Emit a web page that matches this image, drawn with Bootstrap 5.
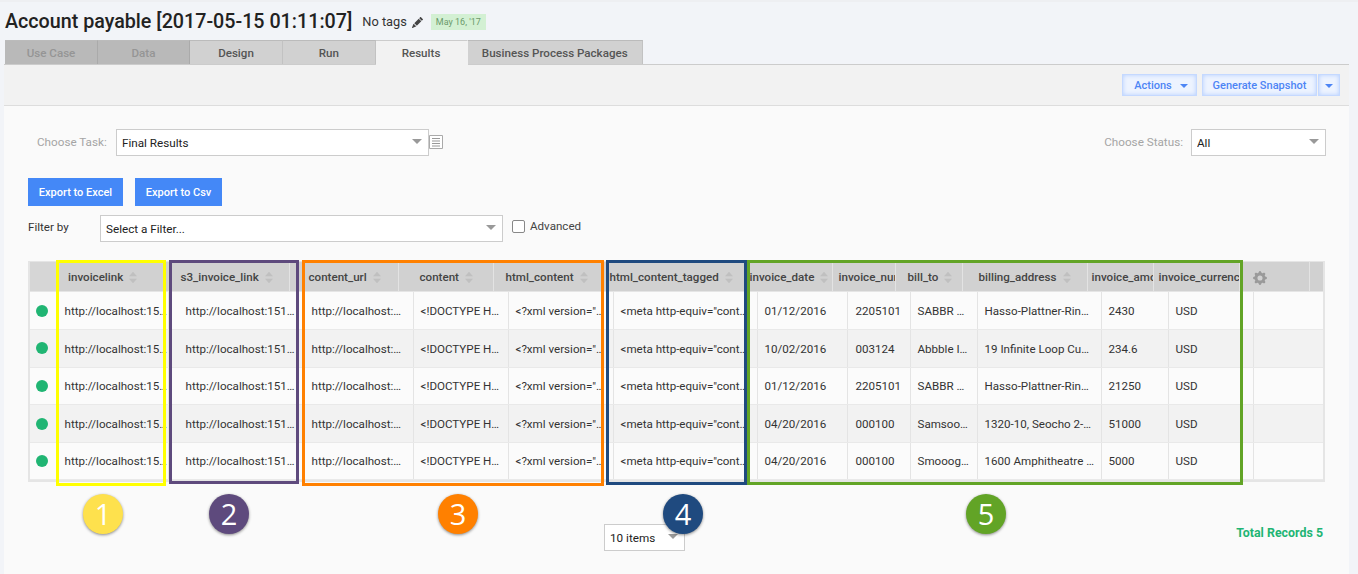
<!DOCTYPE html>
<html lang="en">
<head>
<meta charset="utf-8">
<title>Account payable</title>
<link href="https://cdn.jsdelivr.net/npm/bootstrap@5.3.0/dist/css/bootstrap.min.css" rel="stylesheet">
<style>
html,body{height:574px;overflow:hidden}
body{position:relative;background:#f2f4f8;font-family:Roboto,"Liberation Sans",sans-serif;font-size:11.6px;color:#333;border-top:2px solid #eeeff2}
.title-row{height:38px;padding:2px 0 0 5px;align-items:center}
.page-title{font-size:19.7px;font-weight:500;margin:0;color:#222;line-height:1}
.no-tags{font-size:12.8px;margin-left:10px;color:#333}
.pencil{width:11px;height:11px;fill:#444;margin-left:5px}
.date-tag{margin-left:8px;background:#d3f0d3;color:#6b9a6b;font-size:9px;height:16px;width:55px;line-height:16px;text-align:center}
.tab-strip{margin-left:5px;height:24px;flex-wrap:nowrap;border:0}
.tab-item{height:24px;line-height:25px;text-align:center;font-weight:500;background:#d1d1d1;color:#555;border-top:1px solid #bbb;border-right:1px solid #c2c2c2}
.tab-off{background:#b9b9b9;color:#959595;border-right-color:#aaa}
.tab-on{background:#f2f2f2;color:#555;border-right-color:#f2f2f2;border-top-color:#ccc;height:25px;position:relative;z-index:1}
.w-a{width:93px}.w-b{width:92px}.w-c{width:93px}.w-e{width:92.500px}.w-d{width:175.500px}
.main-panel{margin-left:4px;width:1345px;height:510px;background:#fafafa;border-top:1px solid #ccc}
.tool-row{height:41px;background:#f2f2f2;border-bottom:1px solid #ddd;padding:9px 9px 0 0;justify-content:flex-end;gap:5px}
.glow-btn{height:22px;padding:2px 0 0;font-size:11px;font-weight:500;color:#4d85f5;background:#edf3ff;border:1px solid #c5d9ff;border-radius:0;box-shadow:inset 0 0 4px #b4ceff;display:flex;align-items:center;justify-content:center}
.glow-btn:hover{color:#4d85f5;background:#edf3ff}
.b-act{width:75px;gap:8px;padding-left:3px}.b-snap{width:115px}.b-more{width:22px;margin-left:-4px}
.tri{width:0;height:0;border-left:4.500px solid transparent;border-right:4.500px solid transparent;border-top:4.500px solid #4d85f5}
.panel-inner{padding:23px 24px 0}
.soft-label{color:#a5a5a5;font-size:11.700px;padding-top:1px}
.pick{height:27px;font-size:11.700px;color:#222;padding:2px 24px 0 5px;border:1px solid #ccc;border-radius:0;background-color:#fff;background-image:url("data:image/svg+xml,%3Csvg xmlns='http://www.w3.org/2000/svg' width='10' height='5'%3E%3Cpath d='M0 0h10L5 5z' fill='%23999'/%3E%3C/svg%3E");background-size:10px 5px;background-position:right 6px top 9px;font-family:inherit}
.pick:focus{border-color:#ccc;box-shadow:none}
.task-label{margin-left:9px;width:79px;flex:none}
.task-pick{width:313px;flex:none}
.list-icon{width:14px;height:14px;margin-top:-2px;flex:none}
.status-label{margin-right:8px}
.status-pick{width:135px;flex:none;margin-right:-1px}
.btn-row{margin-top:22px;gap:12px}
.blue-btn{height:28px;font-size:11px;font-weight:500;color:#fff;background:#4488f7;border:0;border-radius:0;padding:2px 0 0;display:flex;align-items:center;justify-content:center}
.blue-btn:hover{background:#4488f7;color:#fff}
.w-xl{width:95px}.w-csv{width:87px}
.filter-row{margin-top:9px}
.filter-label{width:72px;flex:none;color:#333;padding-bottom:2px}
.filter-pick{width:403px;flex:none}
.adv-check{margin:0 0 0 9px;padding:0;display:flex;align-items:center;gap:5px;min-height:0;position:relative;top:-2px;color:#444}
.adv-check .form-check-input{margin:0;width:13px;height:13px;border-radius:2px;border:1px solid #888;float:none}
.grid-frame{margin-top:19px;width:1297px;height:221px;background:#e5e5e5;padding:1px 2px 2px}
.data-table{table-layout:fixed;margin:0;width:1293px;border-collapse:collapse;--bs-table-bg:transparent;--bs-table-border-color:transparent}
.head-table{background:#d1d1d1;height:29px}
.head-table th{padding:2px 0 0;height:29px;font-size:11.600px;font-weight:500;color:#444;white-space:nowrap;overflow:hidden;border-right:1px solid #e3e3e3;border-bottom:0;vertical-align:middle}
.head-table th:first-child{background:#d6d6d6;border-right:0}
.head-table th:last-child{border-right:0}
.sort-ic{width:8px;height:13px;margin-left:6px;vertical-align:-3px;fill:#c0c0c0}
.gear-ic{width:14px;height:14px;fill:#9a9a9a;margin-left:13px}
.body-table{margin-top:1px}
.body-table td{height:37.600px;padding:2px 0 0;font-size:11.600px;color:#333;white-space:nowrap;overflow:hidden;border-right:1px solid #e4e4e4;border-bottom:1px solid #e9e9e9;vertical-align:middle}
.body-table td:last-child{border-right:0}
.body-table tr:nth-child(odd) td{background:#fbfbfb}
.body-table tr:nth-child(even) td{background:#f2f2f2}
.status-dot{display:block;width:12px;height:12px;border-radius:50%;background:#20b573;margin-left:6px;margin-top:-2px}
.head-table col:nth-child(1){width:28px}
.head-table col:nth-child(2){width:113px}
.head-table col:nth-child(3){width:118px}
.head-table col:nth-child(4){width:109px}
.head-table col:nth-child(5){width:95px}
.head-table col:nth-child(6){width:114px}
.head-table col:nth-child(7){width:139px}
.head-table col:nth-child(8){width:86px}
.head-table col:nth-child(9){width:63px}
.head-table col:nth-child(10){width:67px}
.head-table col:nth-child(11){width:125px}
.head-table col:nth-child(12){width:66px}
.head-table col:nth-child(13){width:86px}
.head-table col:nth-child(14){width:70px}
.head-table col:nth-child(15){width:14px}
.head-table th:nth-child(2){padding-left:10px}
.head-table th:nth-child(3){padding-left:9px}
.head-table th:nth-child(4){padding-left:19px}
.head-table th:nth-child(5){padding-left:21px}
.head-table th:nth-child(6){padding-left:12px}
.head-table th:nth-child(7){padding-left:2px}
.head-table th:nth-child(8){padding-left:3px}
.head-table th:nth-child(9){padding-left:6px}
.head-table th:nth-child(10){padding-left:12px}
.head-table th:nth-child(11){padding-left:16px}
.head-table th:nth-child(12){padding-left:4px}
.head-table th:nth-child(13){padding-left:5px}
.body-table col:nth-child(1){width:27px}
.body-table col:nth-child(2){width:111px}
.body-table col:nth-child(3){width:136px}
.body-table col:nth-child(4){width:109px}
.body-table col:nth-child(5){width:95px}
.body-table col:nth-child(6){width:105px}
.body-table col:nth-child(7){width:144px}
.body-table col:nth-child(8){width:90px}
.body-table col:nth-child(9){width:63px}
.body-table col:nth-child(10){width:67px}
.body-table col:nth-child(11){width:124px}
.body-table col:nth-child(12){width:67px}
.body-table col:nth-child(13){width:85px}
.body-table col:nth-child(14){width:70px}
.body-table td{padding-left:7px}
.body-table td:first-child{padding-left:0}
.body-table td:nth-child(3){padding-left:17px}
.body-table td:nth-child(9){padding-left:8px}
.pager-row{margin-top:42px}
.pager-pick{width:81px;flex:none;margin-left:576px}
.total-text{color:#1fb574;font-weight:700;font-size:12.400px;margin-right:2px;padding-bottom:9px}
.mark-box{position:absolute;border:3px solid;pointer-events:none;top:258px}
.mb-1{left:56px;width:110px;height:226px;border-color:#ffff00}
.mb-2{left:169px;width:130px;height:224px;border-color:#5e4a7d}
.mb-3{left:302px;width:302px;height:226px;border-color:#ff8000}
.mb-4{left:606px;width:141px;height:225px;border-color:#1f4a7f}
.mb-5{left:747px;width:496px;height:225px;border-color:#62a426}
.num-disc{position:absolute;top:492px;width:40px;height:40px;border-radius:50%;color:#fff;font-family:"Open Sans","Liberation Sans",sans-serif;font-size:29px;line-height:40px;text-align:center;box-shadow:0 1px 3px rgba(0,0,0,.45)}
.nd-1{left:83px;background:#fee14d}
.nd-2{left:209px;background:#5e4a7d}
.nd-3{left:438px;background:#ff8000}
.nd-4{left:663px;background:#1f4a7f}
.nd-5{left:966px;background:#62a426}
</style>
</head>
<body>
<svg width="0" height="0" class="position-absolute">
<symbol id="sort-sym" viewBox="0 0 9 13"><path d="M4.500 0 9 5H0zM0 8h9l-4.500 5z"/></symbol>
</svg>

<div class="d-flex title-row">
  <h1 class="page-title">Account payable [2017-05-15 01:11:07]</h1>
  <span class="no-tags">No tags</span>
  <svg class="pencil" viewBox="0 0 16 16"><path d="M12.854.146a.5.5 0 0 0-.707 0L10.500 1.793 14.207 5.500l1.647-1.646a.5.5 0 0 0 0-.708l-3-3zm.646 6.061L9.793 2.500 3.293 9H3.500a.5.5 0 0 1 .5.5v.5h.5a.5.5 0 0 1 .5.5v.5h.5a.5.5 0 0 1 .5.5v.5h.5a.5.5 0 0 1 .5.5v.207l6.500-6.500zm-7.468 7.468A.5.5 0 0 1 6 13.500V13h-.5a.5.5 0 0 1-.5-.5V12h-.5a.5.5 0 0 1-.5-.5V11h-.5a.5.5 0 0 1-.5-.5V10h-.5a.499.499 0 0 1-.175-.032l-.179.178a.5.5 0 0 0-.11.168l-2 5a.5.5 0 0 0 .65.65l5-2a.5.5 0 0 0 .168-.11l.178-.178z"/></svg>
  <span class="date-tag">May 16, '17</span>
</div>

<div class="d-flex tab-strip">
  <div class="tab-item tab-off w-a">Use Case</div>
  <div class="tab-item tab-off w-b">Data</div>
  <div class="tab-item w-c">Design</div>
  <div class="tab-item w-e">Run</div>
  <div class="tab-item tab-on w-b">Results</div>
  <div class="tab-item w-d">Business Process Packages</div>
</div>

<div class="main-panel">
  <div class="d-flex tool-row">
    <button class="btn glow-btn b-act">Actions <span class="tri"></span></button>
    <button class="btn glow-btn b-snap">Generate Snapshot</button>
    <button class="btn glow-btn b-more"><span class="tri"></span></button>
  </div>
  <div class="panel-inner">
    <div class="d-flex align-items-center">
      <span class="soft-label task-label">Choose Task:</span>
      <select class="form-select pick task-pick"><option>Final Results</option></select>
      <svg class="list-icon" viewBox="0 0 14 14"><path d="M.5.5h13v13H.5z" fill="#fff" stroke="#aaa"/><path d="M3 3.500h8M3 6h8M3 8.500h8M3 11h8" stroke="#999"/></svg>
      <span class="soft-label status-label ms-auto">Choose Status:</span>
      <select class="form-select pick status-pick"><option>All</option></select>
    </div>
    <div class="d-flex btn-row">
      <button class="btn blue-btn w-xl">Export to Excel</button>
      <button class="btn blue-btn w-csv">Export to Csv</button>
    </div>
    <div class="d-flex align-items-center filter-row">
      <span class="filter-label">Filter by</span>
      <select class="form-select pick filter-pick"><option>Select a Filter...</option></select>
      <label class="form-check adv-check"><input class="form-check-input" type="checkbox"><span>Advanced</span></label>
    </div>

    <div class="grid-frame">
      <table class="table data-table head-table">
        <colgroup><col><col><col><col><col><col><col><col><col><col><col><col><col><col><col></colgroup>
        <thead><tr>
          <th></th>
          <th>invoicelink<svg class="sort-ic"><use href="#sort-sym"/></svg></th>
          <th>s3_invoice_link<svg class="sort-ic"><use href="#sort-sym"/></svg></th>
          <th>content_url<svg class="sort-ic"><use href="#sort-sym"/></svg></th>
          <th>content<svg class="sort-ic"><use href="#sort-sym"/></svg></th>
          <th>html_content<svg class="sort-ic"><use href="#sort-sym"/></svg></th>
          <th>html_content_tagged<svg class="sort-ic"><use href="#sort-sym"/></svg></th>
          <th>invoice_date<svg class="sort-ic"><use href="#sort-sym"/></svg></th>
          <th>invoice_number</th>
          <th>bill_to<svg class="sort-ic"><use href="#sort-sym"/></svg></th>
          <th>billing_address<svg class="sort-ic"><use href="#sort-sym"/></svg></th>
          <th>invoice_amount</th>
          <th>invoice_currency</th>
          <th><svg class="gear-ic" viewBox="0 0 16 16"><path d="M9.405 1.050c-.413-1.400-2.397-1.400-2.810 0l-.1.340a1.464 1.464 0 0 1-2.105.872l-.31-.17c-1.283-.698-2.686.705-1.987 1.987l.169.311c.446.820.023 1.841-.872 2.105l-.34.1c-1.400.413-1.400 2.397 0 2.810l.34.1a1.464 1.464 0 0 1 .872 2.105l-.17.310c-.698 1.283.705 2.686 1.987 1.987l.311-.169a1.464 1.464 0 0 1 2.105.872l.1.340c.413 1.400 2.397 1.400 2.810 0l.1-.34a1.464 1.464 0 0 1 2.105-.872l.310.170c1.283.698 2.686-.705 1.987-1.987l-.169-.311a1.464 1.464 0 0 1 .872-2.105l.340-.1c1.400-.413 1.400-2.397 0-2.810l-.34-.1a1.464 1.464 0 0 1-.872-2.105l.170-.310c.698-1.283-.705-2.686-1.987-1.987l-.311.169a1.464 1.464 0 0 1-2.105-.872l-.1-.34zM8 10.930a2.929 2.929 0 1 1 0-5.860 2.929 2.929 0 0 1 0 5.858z"/></svg></th>
          <th></th>
        </tr></thead>
      </table>
      <table class="table data-table body-table">
        <colgroup><col><col><col><col><col><col><col><col><col><col><col><col><col><col></colgroup>
        <tbody>
          <tr><td><span class="status-dot"></span></td><td>http://localhost:15…</td><td>http://localhost:151…</td><td>http://localhost:…</td><td>&lt;!DOCTYPE H…</td><td>&lt;?xml version="…</td><td>&lt;meta http-equiv="cont…</td><td>01/12/2016</td><td>2205101</td><td>SABBR …</td><td>Hasso-Plattner-Rin…</td><td>2430</td><td>USD</td><td></td></tr>
          <tr><td><span class="status-dot"></span></td><td>http://localhost:15…</td><td>http://localhost:151…</td><td>http://localhost:…</td><td>&lt;!DOCTYPE H…</td><td>&lt;?xml version="…</td><td>&lt;meta http-equiv="cont…</td><td>10/02/2016</td><td>003124</td><td>Abbble I…</td><td>19 Infinite Loop Cu…</td><td>234.6</td><td>USD</td><td></td></tr>
          <tr><td><span class="status-dot"></span></td><td>http://localhost:15…</td><td>http://localhost:151…</td><td>http://localhost:…</td><td>&lt;!DOCTYPE H…</td><td>&lt;?xml version="…</td><td>&lt;meta http-equiv="cont…</td><td>01/12/2016</td><td>2205101</td><td>SABBR …</td><td>Hasso-Plattner-Rin…</td><td>21250</td><td>USD</td><td></td></tr>
          <tr><td><span class="status-dot"></span></td><td>http://localhost:15…</td><td>http://localhost:151…</td><td>http://localhost:…</td><td>&lt;!DOCTYPE H…</td><td>&lt;?xml version="…</td><td>&lt;meta http-equiv="cont…</td><td>04/20/2016</td><td>000100</td><td>Samsoo…</td><td>1320-10, Seocho 2-…</td><td>51000</td><td>USD</td><td></td></tr>
          <tr><td><span class="status-dot"></span></td><td>http://localhost:15…</td><td>http://localhost:151…</td><td>http://localhost:…</td><td>&lt;!DOCTYPE H…</td><td>&lt;?xml version="…</td><td>&lt;meta http-equiv="cont…</td><td>04/20/2016</td><td>000100</td><td>Smooog…</td><td>1600 Amphitheatre …</td><td>5000</td><td>USD</td><td></td></tr>
        </tbody>
      </table>
    </div>

    <div class="d-flex align-items-center justify-content-between pager-row">
      <select class="form-select pick pager-pick"><option>10 items</option></select>
      <span class="total-text">Total Records 5</span>
    </div>
  </div>
</div>

<div class="mark-box mb-1"></div>
<div class="mark-box mb-2"></div>
<div class="mark-box mb-3"></div>
<div class="mark-box mb-4"></div>
<div class="mark-box mb-5"></div>
<div class="num-disc nd-1">1</div>
<div class="num-disc nd-2">2</div>
<div class="num-disc nd-3">3</div>
<div class="num-disc nd-4">4</div>
<div class="num-disc nd-5">5</div>
<script src="https://cdn.jsdelivr.net/npm/bootstrap@5.3.0/dist/js/bootstrap.bundle.min.js"></script>
</body>
</html>
